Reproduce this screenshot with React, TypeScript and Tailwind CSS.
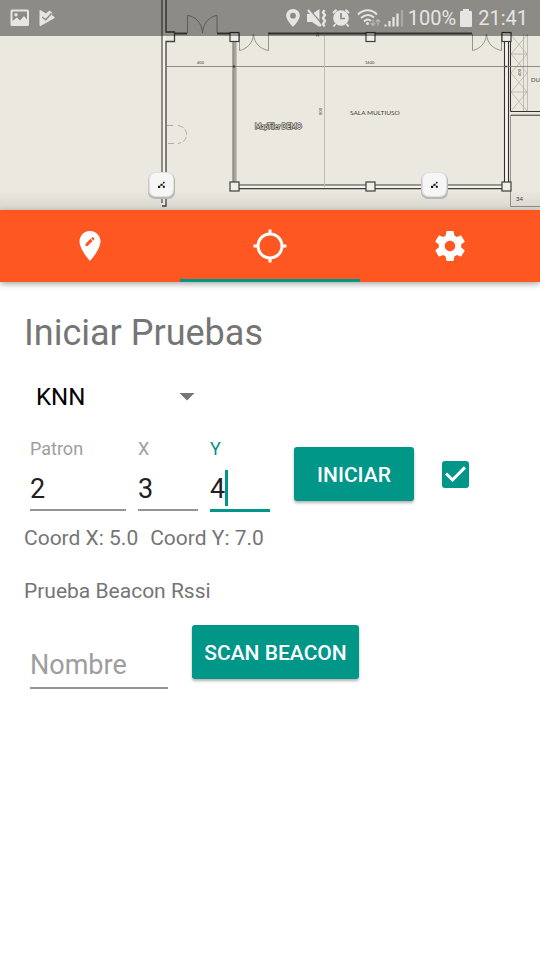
import { useState } from "react";

type Field = "patron" | "x" | "y";

function Pillar({ x, y }: { x: number; y: number }) {
  return <rect x={x} y={y} width="9" height="9" fill="#f1efe8" stroke="#3f3e3b" strokeWidth="1.2" />;
}

function Beacon({ x, y }: { x: number; y: number }) {
  return (
    <g transform={`translate(${x} ${y})`}>
      <rect x="0" y="1" width="27" height="26" rx="7" fill="#b9b8b6" />
      <rect x="0.5" y="0" width="25.5" height="25" rx="7" fill="#dededf" />
      <rect x="2" y="1" width="23" height="23" rx="6" fill="#f6f6f7" />
      <path d="M11 15L14 12.5L16.5 10.5M14 12.500L16 15" stroke="#777" strokeWidth="0.8" fill="none" />
      <rect x="10" y="13.800" width="2.200" height="2.200" fill="#111" />
      <rect x="12.500" y="11.800" width="1.900" height="1.900" fill="#111" />
      <rect x="15" y="9.800" width="1.500" height="1.500" fill="#222" />
      <rect x="14.800" y="13.800" width="2" height="2" fill="#111" />
    </g>
  );
}

function FloorPlan() {
  return (
    <svg
      className="block h-[210px] w-full bg-[#ebe8e0]"
      viewBox="0 0 540 210"
      preserveAspectRatio="xMidYMid slice"
      fontFamily="Lato, 'Open Sans', sans-serif"
      role="img"
      aria-label="Plano"
    >
      <defs>
        <linearGradient id="edge" x1="0" y1="0" x2="0" y2="1">
          <stop offset="0" stopColor="#000" stopOpacity="0" />
          <stop offset="1" stopColor="#000" stopOpacity="0.08" />
        </linearGradient>
      </defs>
      <rect width="540" height="210" fill="#ebe8e0" />

      {/* left outer wall */}
      <rect x="162" y="0" width="4" height="206" fill="#f3f1ea" />
      <path d="M162 0V203" stroke="#77746e" strokeWidth="1.6" fill="none" />
      <path d="M166 0V32H174.5V41.5H166V206H162" stroke="#45433f" strokeWidth="1.3" fill="none" />

      {/* top wall and doors */}
      <path d="M174 33.5H187M217 33.5H230M268 33.5H472" stroke="#55534f" strokeWidth="2" />
      <path
        d="M187.500 33V15.500C195 16 202 23 202.500 33C203 23 210 16 217 15.500V33M239.500 34V50.500C247 49 253 43 253.500 34C254 43 260 49 268.500 50.500V34M472.500 34V50.500C480 49 486 43 486.500 34C487 43 493 49 501.500 50.500V34"
        stroke="#8d8a84"
        strokeWidth="0.9"
        fill="none"
      />

      {/* inner wall */}
      <rect x="232.500" y="41" width="3" height="141" fill="#a3a09a" />
      <path d="M233 41V182M236 41V182" stroke="#75726d" strokeWidth="0.7" />

      {/* bottom wall */}
      <rect x="239" y="185" width="263" height="4" fill="#f6f4ee" />
      <path d="M239 185H502M239 188.700H502" stroke="#3f3e3b" strokeWidth="1.2" />

      {/* right wall */}
      <rect x="504.500" y="41" width="4" height="142" fill="#f6f4ee" />
      <path d="M504.500 41V182M508.500 41V182" stroke="#33312f" strokeWidth="1.1" />
      <path d="M510.500 36V111.500H540M510.500 115.200H540" stroke="#33312f" strokeWidth="1" fill="none" />
      <path d="M510.500 115V206.500H540" stroke="#97948d" strokeWidth="1" fill="none" />

      {/* shower cubicles */}
      <path
        d="M511 54H527M511 92H527M511 35L527 54L511 73L527 92L511 111M527 35L511 54L527 73L511 92L527 111M527.500 34V111M523.500 34V111"
        stroke="#aeaba4"
        strokeWidth="0.7"
        fill="none"
      />

      {/* dimension lines */}
      <path d="M166 66.500H540" stroke="#85827c" strokeWidth="0.9" />
      <path d="M324.500 34V187" stroke="#bbb8b0" strokeWidth="0.9" />
      <circle cx="234" cy="66.500" r="1.200" fill="#3f3e3b" />
      <circle cx="506" cy="66.500" r="1" fill="#3f3e3b" />
      <path
        d="M167 125.500H174M178 125.500Q186.500 127 186.500 134.500Q186.500 142 178 143.500M174 143.500H167"
        stroke="#a9a69f"
        strokeWidth="0.9"
        strokeDasharray="6 2"
        fill="none"
      />

      <Pillar x={230} y={32.5} />
      <Pillar x={366} y={32.5} />
      <Pillar x={502} y={32.5} />
      <Pillar x={230} y={182} />
      <Pillar x={366} y={182} />
      <Pillar x={502} y={182} />

      <g fill="#3f3e3b">
        <text x="197" y="64" fontSize="4">400</text>
        <text x="365" y="64" fontSize="4">1600</text>
        <text x="350" y="115" fontSize="6.500">SALA MULTIUSO</text>
        <text x="531" y="82" fontSize="6">DU</text>
        <text x="516" y="201" fontSize="6">34</text>
        <text transform="translate(322 115) rotate(-90)" fontSize="4">800</text>
        <text transform="translate(521 76) rotate(-90)" fontSize="4">400</text>
        <text transform="translate(319 37) rotate(-90)" fontSize="4">20</text>
      </g>
      <text x="255" y="129" fontSize="6.500" fontWeight="700" fill="#e8e6df" stroke="#33312f" strokeWidth="1.200" paintOrder="stroke">
        MapTiler DEMO
      </text>

      <rect y="190" width="540" height="20" fill="url(#edge)" />
      <Beacon x={148} y={172} />
      <Beacon x={421} y={172} />
    </svg>
  );
}

function StatusBar() {
  return (
    <div className="absolute inset-x-0 top-0 flex h-9 items-center justify-between bg-black/40 pr-3 pl-2 text-[#e6e5e3]">
      <div className="flex items-center gap-1">
        <svg className="size-6" viewBox="0 0 24 24" fill="currentColor">
          <path
            fillRule="evenodd"
            d="M4 3.500H19.500Q21 3.500 21 5V18.500Q21 20 19.500 20H4Q2.500 20 2.500 18.500V5Q2.500 3.500 4 3.500ZM4.500 5.500V15L9 11.500L12 14.500L16 10L19 13.500V5.500ZM8 7A1.700 1.700 0 1 1 8 10.400A1.700 1.700 0 0 1 8 7Z"
          />
        </svg>
        <svg className="size-6" viewBox="0 0 24 24" fill="currentColor">
          <path d="M3.500 5Q3.500 3.600 4.700 4.200L10 7.500L13.500 4.500L16.500 7L15.500 9L18.300 10.800Q19.200 11.500 18.300 12.300L5 19.700Q3.500 20.300 3.500 19Z" />
          <path d="M6.200 11L9.800 13.800L15.600 7.300" fill="none" stroke="#8d8b86" strokeWidth="1.400" />
        </svg>
      </div>
      <div className="flex items-center">
        <svg className="h-6 w-[120px]" viewBox="284 6 120 24" fill="currentColor">
          <path
            fillRule="evenodd"
            d="M293 9C289 9 286.200 12 286.200 15.600C286.200 20.500 293 27 293 27S299.800 20.500 299.800 15.600C299.800 12 297 9 293 9ZM293 12.800A2.900 2.900 0 1 1 293 18.600A2.900 2.900 0 0 1 293 12.800Z"
          />
          <path d="M307 14H312L319.500 9V27L312 22H307Z" />
          <path d="M310 10L322 24" stroke="#8d8b86" strokeWidth="1.200" />
          <path d="M308 10L321 26" stroke="currentColor" strokeWidth="2" />
          <path
            d="M324.500 10L323 12.500L325 15L323 18L325 21L323 24L324.500 26.500"
            stroke="currentColor"
            strokeWidth="2.400"
            fill="none"
          />
          <circle cx="341" cy="18" r="7.800" />
          <path d="M333 13L336.500 9.800M349 13L345.500 9.800M335.500 24L333.500 26.500M346.500 24L348.500 26.500" stroke="currentColor" strokeWidth="2" />
          <path d="M341 13V18.500H345" stroke="#8d8b86" strokeWidth="1.700" fill="none" />
          <path
            d="M358 14.500C363.500 8.800 371.500 8.800 377 14.500M361 18C365 14 370.500 14 374 17.500M364 21.500C366.500 19 369 19 371 21"
            stroke="currentColor"
            strokeWidth="1.900"
            fill="none"
          />
          <circle cx="367.500" cy="23.500" r="1.500" />
          <path
            d="M373 19.500V25M370.800 23L373 25.500L375.200 23M378 26V20M375.800 22L378 19.500L380.200 22"
            stroke="#b9b7b3"
            strokeWidth="1.200"
            fill="none"
          />
          <path d="M385.500 26.500V24.500M389.500 26.500V21M393.500 26.500V17M397.500 26.500V13.500" stroke="currentColor" strokeWidth="2.200" />
          <path d="M402 26.500V10" stroke="#aaa8a4" strokeWidth="2.200" />
        </svg>
        <span className="ml-1 text-[20px] leading-6">100%</span>
        <svg className="mr-[6px] ml-1 h-6 w-3" viewBox="2 0 12 24" fill="currentColor">
          <path d="M5 3H11V5H13Q14 5 14 6V20Q14 21 13 21H3Q2 21 2 20V6Q2 5 3 5H5Z" />
        </svg>
        <span className="text-[20px] leading-6">21:41</span>
      </div>
    </div>
  );
}

const tabs = [
  {
    label: "Ubicación",
    path: "M12 2C8.140 2 5 5.140 5 9c0 5.250 7 13 7 13s7-7.750 7-13c0-3.860-3.140-7-7-7zm-1.560 10H9v-1.440l3.350-3.340 1.430 1.430L10.440 12zm4.450-4.450l-.7.7-1.440-1.440.7-.7c.15-.15.39-.15.54 0l.9.9c.15.15.15.39 0 .54z",
  },
  {
    label: "Pruebas",
    path: "M20.940 11c-.46-4.170-3.770-7.480-7.940-7.940V1h-2v2.060C6.830 3.520 3.520 6.830 3.060 11H1v2h2.060c.46 4.170 3.770 7.480 7.940 7.940V23h2v-2.060c4.170-.46 7.480-3.770 7.940-7.940H23v-2h-2.060zM12 19c-3.870 0-7-3.130-7-7s3.130-7 7-7 7 3.130 7 7-3.130 7-7 7z",
  },
  {
    label: "Ajustes",
    path: "M19.430 12.980c.04-.32.07-.64.07-.98s-.03-.66-.07-.98l2.110-1.650c.19-.15.24-.42.12-.64l-2-3.460c-.12-.22-.39-.3-.61-.22l-2.490 1c-.52-.4-1.080-.73-1.690-.98l-.38-2.650C14.460 2.180 14.250 2 14 2h-4c-.25 0-.46.18-.49.42l-.38 2.650c-.61.25-1.170.59-1.690.98l-2.490-1c-.23-.09-.49 0-.61.22l-2 3.460c-.13.22-.07.49.12.64l2.110 1.650c-.04.32-.07.65-.07.98s.03.66.07.98l-2.110 1.650c-.19.15-.24.42-.12.64l2 3.460c.12.22.39.3.61.22l2.490-1c.52.4 1.080.73 1.690.98l.38 2.650c.03.24.24.42.49.42h4c.25 0 .46-.18.49-.42l.38-2.650c.61-.25 1.170-.59 1.690-.98l2.490 1c.23.09.49 0 .61-.22l2-3.460c.12-.22.07-.49-.12-.64l-2.110-1.650zM12 15.500c-1.930 0-3.500-1.570-3.500-3.500s1.570-3.500 3.500-3.500 3.500 1.570 3.500 3.500-1.570 3.500-3.500 3.500z",
  },
];

function NumberField({
  id,
  label,
  value,
  active,
  width,
  onChange,
  onFocus,
}: {
  id: string;
  label: string;
  value: string;
  active: boolean;
  width: string;
  onChange: (v: string) => void;
  onFocus: () => void;
}) {
  return (
    <div className={`relative flex flex-col ${width}`}>
      <label htmlFor={id} className={`text-[18px] leading-[21px] ${active ? "text-[#009688]" : "text-[#9e9e9e]"}`}>
        {label}
      </label>
      <input
        id={id}
        value={value}
        inputMode="numeric"
        onChange={(e) => onChange(e.target.value)}
        onFocus={onFocus}
        className={`mt-[10px] w-full bg-transparent p-0 text-[27px] leading-8 text-[#212121] caret-transparent outline-none ${
          active ? "-mb-px h-[43px] border-b-3 border-[#009688]" : "h-[42px] border-b-2 border-[#949494]"
        }`}
      />
      {active && <span className="pointer-events-none absolute top-8 left-[15px] h-9 w-[3px] bg-[#009688]" />}
    </div>
  );
}

const raised =
  "h-[54px] rounded-[3px] bg-[#009688] pt-[2px] text-[21px] leading-6 font-medium text-white shadow-[0_2px_3px_rgba(0,0,0,0.3)]";

export default function App() {
  const [tab, setTab] = useState(1);
  const [focus, setFocus] = useState<Field>("y");
  const [values, setValues] = useState({ patron: "2", x: "3", y: "4" });
  const [checked, setChecked] = useState(true);
  const set = (k: Field) => (v: string) => setValues({ ...values, [k]: v });

  return (
    <div className="min-h-screen bg-white font-[Roboto,sans-serif] text-[#757575]">
      <header className="relative">
        <FloorPlan />
        <StatusBar />
      </header>

      <nav className="relative grid h-[72px] grid-cols-3 bg-[#ff5722] shadow-[0_2px_6px_rgba(0,0,0,0.35)]">
        {tabs.map((t, i) => (
          <button
            key={t.label}
            type="button"
            aria-label={t.label}
            onClick={() => setTab(i)}
            className={`flex items-center justify-center border-y-3 border-t-transparent text-white ${
              i === tab ? "border-b-[#009688]" : "border-b-transparent"
            }`}
          >
            <svg className="size-9" viewBox="0 0 24 24" fill="currentColor">
              <path d={t.path} />
            </svg>
          </button>
        ))}
      </nav>

      <main className="px-6 pt-[30px]">
        <h1 className="text-[36px] leading-[42px]">Iniciar Pruebas</h1>

        <div className="relative mt-[22px] w-[180px]">
          <select
            aria-label="Algoritmo"
            className="h-[42px] w-full appearance-none bg-transparent pl-3 text-[24px] leading-7 text-black outline-none"
          >
            <option>KNN</option>
          </select>
          <svg className="pointer-events-none absolute top-[17px] right-[9px] h-2 w-4" viewBox="0 0 16 8" fill="#757575">
            <path d="M0.500 0H15.500L8 7.500Z" />
          </svg>
        </div>

        <div className="mt-5 flex items-start pl-[6px]">
          <div className="flex gap-3">
            <NumberField id="patron" label="Patron" width="w-24" value={values.patron} active={focus === "patron"} onChange={set("patron")} onFocus={() => setFocus("patron")} />
            <NumberField id="x" label="X" width="w-[60px]" value={values.x} active={focus === "x"} onChange={set("x")} onFocus={() => setFocus("x")} />
            <NumberField id="y" label="Y" width="w-[60px]" value={values.y} active={focus === "y"} onChange={set("y")} onFocus={() => setFocus("y")} />
          </div>
          <div className="mt-[9px] ml-6 flex items-center gap-7">
            <button type="button" className={`${raised} w-[120px]`}>
              INICIAR
            </button>
            <label className="relative block size-[27px]">
              <input
                type="checkbox"
                aria-label="Activar"
                checked={checked}
                onChange={(e) => setChecked(e.target.checked)}
                className="block size-[27px] appearance-none rounded-[3px] border-2 border-[#757575] checked:border-[#009688] checked:bg-[#009688]"
              />
              {checked && (
                <svg className="pointer-events-none absolute inset-0 size-[27px]" viewBox="0 0 18 18" fill="#fff">
                  <path d="M7 14L2 9l1.410-1.410L7 11.170l7.590-7.590L16 5z" />
                </svg>
              )}
            </label>
          </div>
        </div>

        <div className="mt-[15px] flex gap-3 text-[21px] leading-6">
          <p>Coord X: 5.0</p>
          <p>Coord Y: 7.0</p>
        </div>

        <h2 className="mt-[29px] text-[21px] leading-6">Prueba Beacon Rssi</h2>

        <div className="mt-[22px] flex items-start gap-6 pl-[6px]">
          <input
            aria-label="Nombre"
            placeholder="Nombre"
            className="mt-5 h-11 w-[138px] border-b-2 border-[#949494] bg-transparent px-0 pt-0 pb-[3px] text-[27px] leading-8 text-[#212121] outline-none placeholder:text-[#9e9e9e]"
          />
          <button type="button" className={`${raised} w-[167px]`}>
            SCAN BEACON
          </button>
        </div>
      </main>
    </div>
  );
}
